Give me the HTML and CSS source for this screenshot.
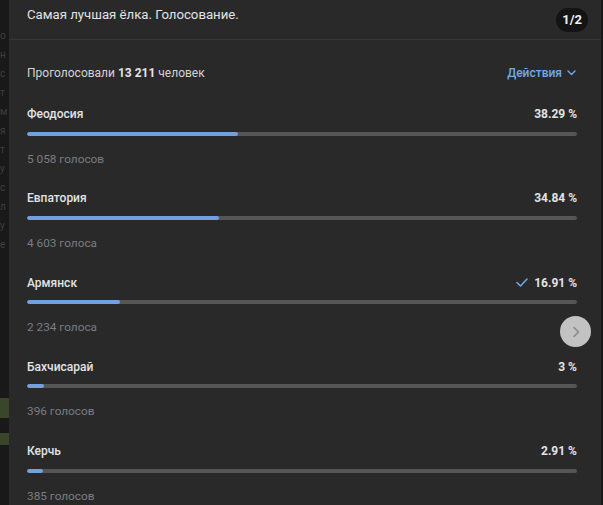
FILE: index.html
```html
<!DOCTYPE html>
<html lang="ru">
<head>
    <meta charset="UTF-8">
    <meta name="viewport" content="width=device-width, initial-scale=1.0">
    <title>Голосование</title>
    <link rel="stylesheet" href="styles.css">
</head>
<body>
    <div class="page-edge">
        <p>о</p><p>н</p><p>с</p><p>т</p><p>м</p><p>я</p><p>т</p><p>у</p><p>с</p><p>л</p><p>у</p><p>е</p>
        <div class="green green-one"></div>
        <div class="green green-two"></div>
    </div>
    <div class="modal">
        <div class="modal-header">
            <h1>Самая лучшая ёлка. Голосование.</h1>
            <span class="badge">1/2</span>
        </div>
        <div class="modal-body">
            <div class="summary">
                <p>Проголосовали <b>13 211</b> человек</p>
                <a href="#" class="actions">Действия
                    <svg width="9" height="6" viewBox="0 0 9 6"><path d="M1 1l3.5 3.5L8 1" fill="none" stroke="#71aaeb" stroke-width="1.4" stroke-linecap="round" stroke-linejoin="round"/></svg>
                </a>
            </div>
            <ul class="options">
                <li class="option">
                    <div class="option-head"><span>Феодосия</span><span class="percent">38.29 %</span></div>
                    <div class="bar"><div class="bar-fill" style="width: 38.29%"></div></div>
                    <div class="votes">5 058 голосов</div>
                </li>
                <li class="option">
                    <div class="option-head"><span>Евпатория</span><span class="percent">34.84 %</span></div>
                    <div class="bar"><div class="bar-fill" style="width: 34.84%"></div></div>
                    <div class="votes">4 603 голоса</div>
                </li>
                <li class="option">
                    <div class="option-head"><span>Армянск</span>
                        <span class="percent">
                            <svg class="check" width="12" height="9" viewBox="0 0 12 9"><path d="M1 4.5l3.5 3.5L11 1" fill="none" stroke="#71aaeb" stroke-width="1.5" stroke-linecap="round" stroke-linejoin="round"/></svg>16.91 %
                        </span>
                    </div>
                    <div class="bar"><div class="bar-fill" style="width: 16.91%"></div></div>
                    <div class="votes">2 234 голоса</div>
                </li>
                <li class="option">
                    <div class="option-head"><span>Бахчисарай</span><span class="percent">3 %</span></div>
                    <div class="bar"><div class="bar-fill" style="width: 3%"></div></div>
                    <div class="votes">396 голосов</div>
                </li>
                <li class="option">
                    <div class="option-head"><span>Керчь</span><span class="percent">2.91 %</span></div>
                    <div class="bar"><div class="bar-fill" style="width: 2.91%"></div></div>
                    <div class="votes">385 голосов</div>
                </li>
            </ul>
        </div>
        <button class="next" type="button">
            <svg width="10" height="12" viewBox="0 0 10 12"><path d="M3 1.5L7.5 6 3 10.5" fill="none" stroke="#8a8a8a" stroke-width="1.6" stroke-linecap="round" stroke-linejoin="round"/></svg>
        </button>
    </div>
</body>
</html>
```

FILE: styles.css
```css
body {
    margin: 0;
    height: 505px;
    overflow: hidden;
    display: flex;
    background-color: #19191a;
    font-family: Roboto, "Liberation Sans", Arial, sans-serif;
    color: #e1e3e6;
}
.page-edge {
    width: 9px;
    flex-shrink: 0;
    position: relative;
    overflow: hidden;
    padding-top: 26px;
}
.page-edge p {
    margin: 0;
    font-size: 10px;
    line-height: 19px;
    color: #3e3f41;
}
.green {
    position: absolute;
    left: 0;
    width: 9px;
    background-color: #3a4629;
}
.green-one {
    top: 398px;
    height: 20px;
}
.green-two {
    top: 433px;
    height: 12px;
}
.modal {
    position: relative;
    width: 592px;
    flex-shrink: 0;
    background-color: #292929;
}
.modal-header {
    height: 39px;
    display: flex;
    align-items: center;
    justify-content: space-between;
    padding: 0 13px 0 18px;
    border-bottom: 1px solid #363636;
}
.modal-header h1 {
    margin: 0;
    font-size: 13.2px;
    line-height: 20px;
    font-weight: 400;
    color: #e1e3e6;
    padding-bottom: 9px;
}
.badge {
    background-color: #141414;
    color: #f0f0f0;
    font-size: 13px;
    font-weight: 700;
    line-height: 24px;
    padding: 0 6px;
    border-radius: 12px;
}
.modal-body {
    padding: 0 24px 0 18px;
}
.summary {
    display: flex;
    justify-content: space-between;
    align-items: center;
    margin-top: 25px;
    height: 16px;
}
.summary p {
    margin: 0;
    font-size: 12px;
    line-height: 16px;
    color: #d2d4d6;
}
.summary b {
    font-weight: 700;
    color: #e1e3e6;
}
.actions {
    display: flex;
    align-items: center;
    gap: 5px;
    margin-right: 1px;
    font-size: 12px;
    line-height: 16px;
    font-weight: 500;
    color: #71aaeb;
    text-decoration: none;
}
.options {
    list-style: none;
    margin: 25px 0 0;
    padding: 0;
}
.option {
    padding-bottom: 23.75px;
}
.option-head {
    display: flex;
    justify-content: space-between;
    align-items: center;
    font-size: 12px;
    line-height: 16px;
    font-weight: 500;
    color: #e1e3e6;
}
.percent {
    display: flex;
    align-items: center;
    font-weight: 700;
}
.check {
    margin-right: 6px;
}
.bar {
    margin-top: 9.5px;
    height: 4px;
    border-radius: 2px;
    background-color: #555555;
    overflow: hidden;
}
.bar-fill {
    height: 100%;
    background-color: #71a2df;
    border-radius: 2px;
}
.votes {
    margin-top: 15px;
    font-size: 11.8px;
    line-height: 16px;
    color: #7b7d80;
}
.next {
    position: absolute;
    left: 551px;
    top: 316px;
    width: 31px;
    height: 31px;
    border: none;
    border-radius: 50%;
    padding: 0;
    background-color: #c2c2c2;
    display: flex;
    align-items: center;
    justify-content: center;
    cursor: pointer;
}
```
